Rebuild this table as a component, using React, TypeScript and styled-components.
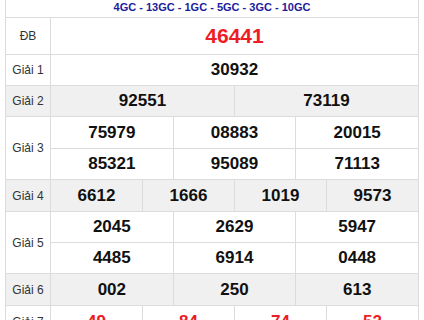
import React from "react";
import styled, { createGlobalStyle } from "styled-components";

const Global = createGlobalStyle`
  html, body { margin: 0; padding: 0; background: #fff; }
  body { font-family: "Liberation Sans", Arial, sans-serif; overflow: hidden; }
`;

const Board = styled.div`
  margin-left: 5px;
  width: 414px;
  box-sizing: border-box;
  border-left: 1px solid #dcdcdc;
  border-right: 1px solid #dcdcdc;
  background: #dcdcdc;
  display: grid;
  grid-template-columns: 44px repeat(12, 1fr);
  grid-template-rows: 17px 36px 30px 30px 31px 30px 31px 30px 30px 31px 31px;
  gap: 1px;
`;

const Header = styled.div`
  grid-column: 1 / -1;
  background: #fff;
  color: #1c1c9c;
  font-weight: bold;
  font-size: 11px;
  line-height: 14px;
  text-align: center;
`;

const Label = styled.div<{ $rows?: number; $alt?: boolean }>`
  grid-row: span ${(p) => p.$rows ?? 1};
  background: ${(p) => (p.$alt ? "#f0f0f0" : "#fff")};
  color: #333;
  font-size: 12px;
  display: flex;
  align-items: center;
  justify-content: center;
`;

const Num = styled.div<{ $span: number; $alt?: boolean; $red?: boolean; $big?: boolean }>`
  grid-column: span ${(p) => p.$span};
  background: ${(p) => (p.$alt ? "#f0f0f0" : "#fff")};
  color: ${(p) => (p.$red ? "#ee1c25" : "#111")};
  font-weight: bold;
  font-size: ${(p) => (p.$big ? "21px" : "17px")};
  display: flex;
  align-items: center;
  justify-content: center;
  letter-spacing: 0;
`;

type Prize = { label: string; cols: number; nums: string[]; alt?: boolean; red?: boolean; big?: boolean };

const prizes: Prize[] = [
  { label: "ĐB", cols: 1, nums: ["46441"], red: true, big: true },
  { label: "Giải 1", cols: 1, nums: ["30932"] },
  { label: "Giải 2", cols: 2, nums: ["92551", "73119"], alt: true },
  { label: "Giải 3", cols: 3, nums: ["75979", "08883", "20015", "85321", "95089", "71113"] },
  { label: "Giải 4", cols: 4, nums: ["6612", "1666", "1019", "9573"], alt: true },
  { label: "Giải 5", cols: 3, nums: ["2045", "2629", "5947", "4485", "6914", "0448"] },
  { label: "Giải 6", cols: 3, nums: ["002", "250", "613"], alt: true },
  { label: "Giải 7", cols: 4, nums: ["49", "84", "74", "52"], red: true },
];

export default function App() {
  return (
    <>
      <Global />
      <Board>
        <Header>4GC - 13GC - 1GC - 5GC - 3GC - 10GC</Header>
        {prizes.map((p) => (
          <React.Fragment key={p.label}>
            <Label $rows={p.nums.length / p.cols} $alt={p.alt}>
              {p.label}
            </Label>
            {p.nums.map((n, i) => (
              <Num key={i} $span={12 / p.cols} $alt={p.alt} $red={p.red} $big={p.big}>
                {n}
              </Num>
            ))}
          </React.Fragment>
        ))}
      </Board>
    </>
  );
}
